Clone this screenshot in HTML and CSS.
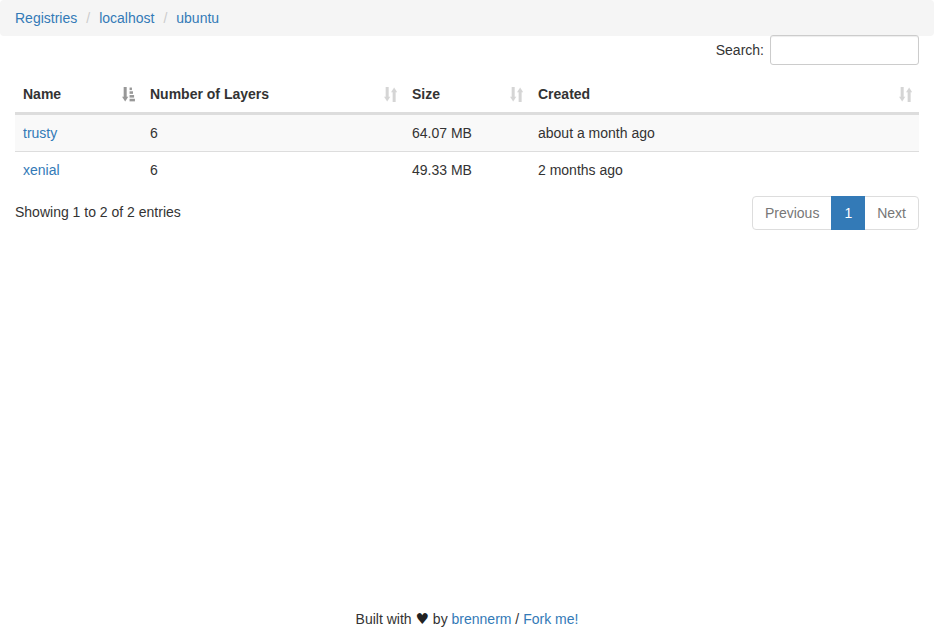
FILE: index.html
```html
<!DOCTYPE html>
<html lang="en">
<head>
<meta charset="utf-8">
<title>ubuntu - Registry</title>
<link rel="stylesheet" href="styles.css">
</head>
<body>
<div class="page">
  <ol class="breadcrumb">
    <li><a href="#">Registries</a></li>
    <li><a href="#">localhost</a></li>
    <li><a href="#">ubuntu</a></li>
  </ol>

  <div class="wrapper">
    <div class="filter-row">
      <label class="filter">Search:<input type="search" class="search-input"></label>
    </div>

    <table class="data-table">
      <thead>
        <tr>
          <th class="col-name sorting active">Name
            <svg class="sort-icon" viewBox="0 0 12 14" width="13" height="15"><rect x="1.5" y="0" width="2.8" height="10"/><polygon points="0,9 5.8,9 2.9,13.6"/><rect x="7" y="0.5" width="2.2" height="2.4"/><rect x="7" y="4" width="3.2" height="2.4"/><rect x="7" y="7.5" width="4.2" height="2.4"/><rect x="7" y="11" width="5" height="2.4"/></svg>
          </th>
          <th class="col-layers sorting">Number of Layers
            <svg class="sort-icon" viewBox="0 0 12 14" width="13" height="15"><rect x="1.5" y="0" width="2.8" height="10"/><polygon points="0,9 5.8,9 2.9,13.6"/><rect x="8" y="4" width="2.8" height="10"/><polygon points="6.5,5 12.3,5 9.4,0.4"/></svg>
          </th>
          <th class="col-size sorting">Size
            <svg class="sort-icon" viewBox="0 0 12 14" width="13" height="15"><rect x="1.5" y="0" width="2.8" height="10"/><polygon points="0,9 5.8,9 2.9,13.6"/><rect x="8" y="4" width="2.8" height="10"/><polygon points="6.5,5 12.3,5 9.4,0.4"/></svg>
          </th>
          <th class="col-created sorting">Created
            <svg class="sort-icon" viewBox="0 0 12 14" width="13" height="15"><rect x="1.5" y="0" width="2.8" height="10"/><polygon points="0,9 5.8,9 2.9,13.6"/><rect x="8" y="4" width="2.8" height="10"/><polygon points="6.5,5 12.3,5 9.4,0.4"/></svg>
          </th>
        </tr>
      </thead>
      <tbody>
        <tr class="odd">
          <td><a href="#">trusty</a></td>
          <td>6</td>
          <td>64.07 MB</td>
          <td>about a month ago</td>
        </tr>
        <tr class="even">
          <td><a href="#">xenial</a></td>
          <td>6</td>
          <td>49.33 MB</td>
          <td>2 months ago</td>
        </tr>
      </tbody>
    </table>

    <div class="bottom-row">
      <div class="info">Showing 1 to 2 of 2 entries</div>
      <ul class="pagination">
        <li class="disabled"><a href="#">Previous</a></li>
        <li class="current"><a href="#">1</a></li>
        <li class="disabled"><a href="#">Next</a></li>
      </ul>
    </div>
  </div>

  <footer class="footer">Built with <span class="heart">&#x2665;</span> by <a href="#">brennerm</a> / <a href="#">Fork me!</a></footer>
</div>
</body>
</html>
```

FILE: styles.css
```css
* { box-sizing: border-box; }

html, body {
  margin: 0;
  padding: 0;
}

body {
  font-family: "Liberation Sans", Arial, Helvetica, sans-serif;
  font-size: 14px;
  line-height: 20px;
  color: #333;
  background: #fff;
}

a { color: #337ab7; text-decoration: none; }

.page {
  min-height: 100vh;
  display: flex;
  flex-direction: column;
}

.breadcrumb {
  list-style: none;
  margin: 0;
  padding: 8px 15px;
  height: 36px;
  background: #f5f5f5;
  border-radius: 4px;
  display: flex;
}

.breadcrumb li + li::before {
  content: "/";
  color: #ccc;
  padding: 0 9px;
}

.wrapper {
  padding: 0 15px;
}

.filter-row {
  display: flex;
  justify-content: flex-end;
  height: 34px;
}

.filter {
  font-weight: normal;
  display: flex;
  align-items: center;
  height: 30px;
  margin-top: -1px;
}

.search-input {
  margin-left: 6px;
  width: 149px;
  height: 30px;
  padding: 5px 10px;
  font-size: 12px;
  border: 1px solid #ccc;
  border-radius: 3px;
  box-shadow: inset 0 1px 1px rgba(0,0,0,.075);
  font-family: inherit;
}

.data-table {
  width: 100%;
  margin-top: 6px;
  margin-bottom: 6px;
  border-collapse: separate;
  border-spacing: 0;
  table-layout: fixed;
}

.data-table th,
.data-table td {
  padding: 8px;
  text-align: left;
  line-height: 20px;
}

.data-table th {
  position: relative;
  font-weight: bold;
  padding-right: 30px;
  vertical-align: bottom;
  border-bottom: 2px solid #ddd;
}

.data-table td {
  border-top: 1px solid #ddd;
  vertical-align: top;
}

.data-table tbody tr.odd { background: #f9f9f9; }

.col-name { width: 127px; }
.col-layers { width: 262px; }
.col-size { width: 126px; }

.sort-icon {
  position: absolute;
  right: 7px;
  bottom: 10px;
  fill: #333;
  opacity: 0.2;
}

.active .sort-icon { opacity: 0.5; }

.bottom-row {
  display: flex;
  justify-content: space-between;
  align-items: flex-start;
}

.info {
  padding-top: 8px;
}

.pagination {
  list-style: none;
  margin: 2px 0 0;
  padding: 0;
  display: flex;
}

.pagination li a {
  display: block;
  padding: 6px 12px;
  line-height: 20px;
  border: 1px solid #ddd;
  margin-left: -1px;
  background: #fff;
  color: #337ab7;
}

.pagination li.disabled a { color: #777; }

.pagination li:first-child a {
  margin-left: 0;
  border-radius: 4px 0 0 4px;
}

.pagination li:last-child a {
  border-radius: 0 4px 4px 0;
}

.pagination li.current a {
  background: #337ab7;
  border-color: #337ab7;
  color: #fff;
  position: relative;
  z-index: 2;
}

.footer {
  margin-top: auto;
  text-align: center;
  padding-bottom: 10px;
}

.heart {
  color: #222;
  font-family: "DejaVu Sans", sans-serif;
  font-size: 15px;
}
```
